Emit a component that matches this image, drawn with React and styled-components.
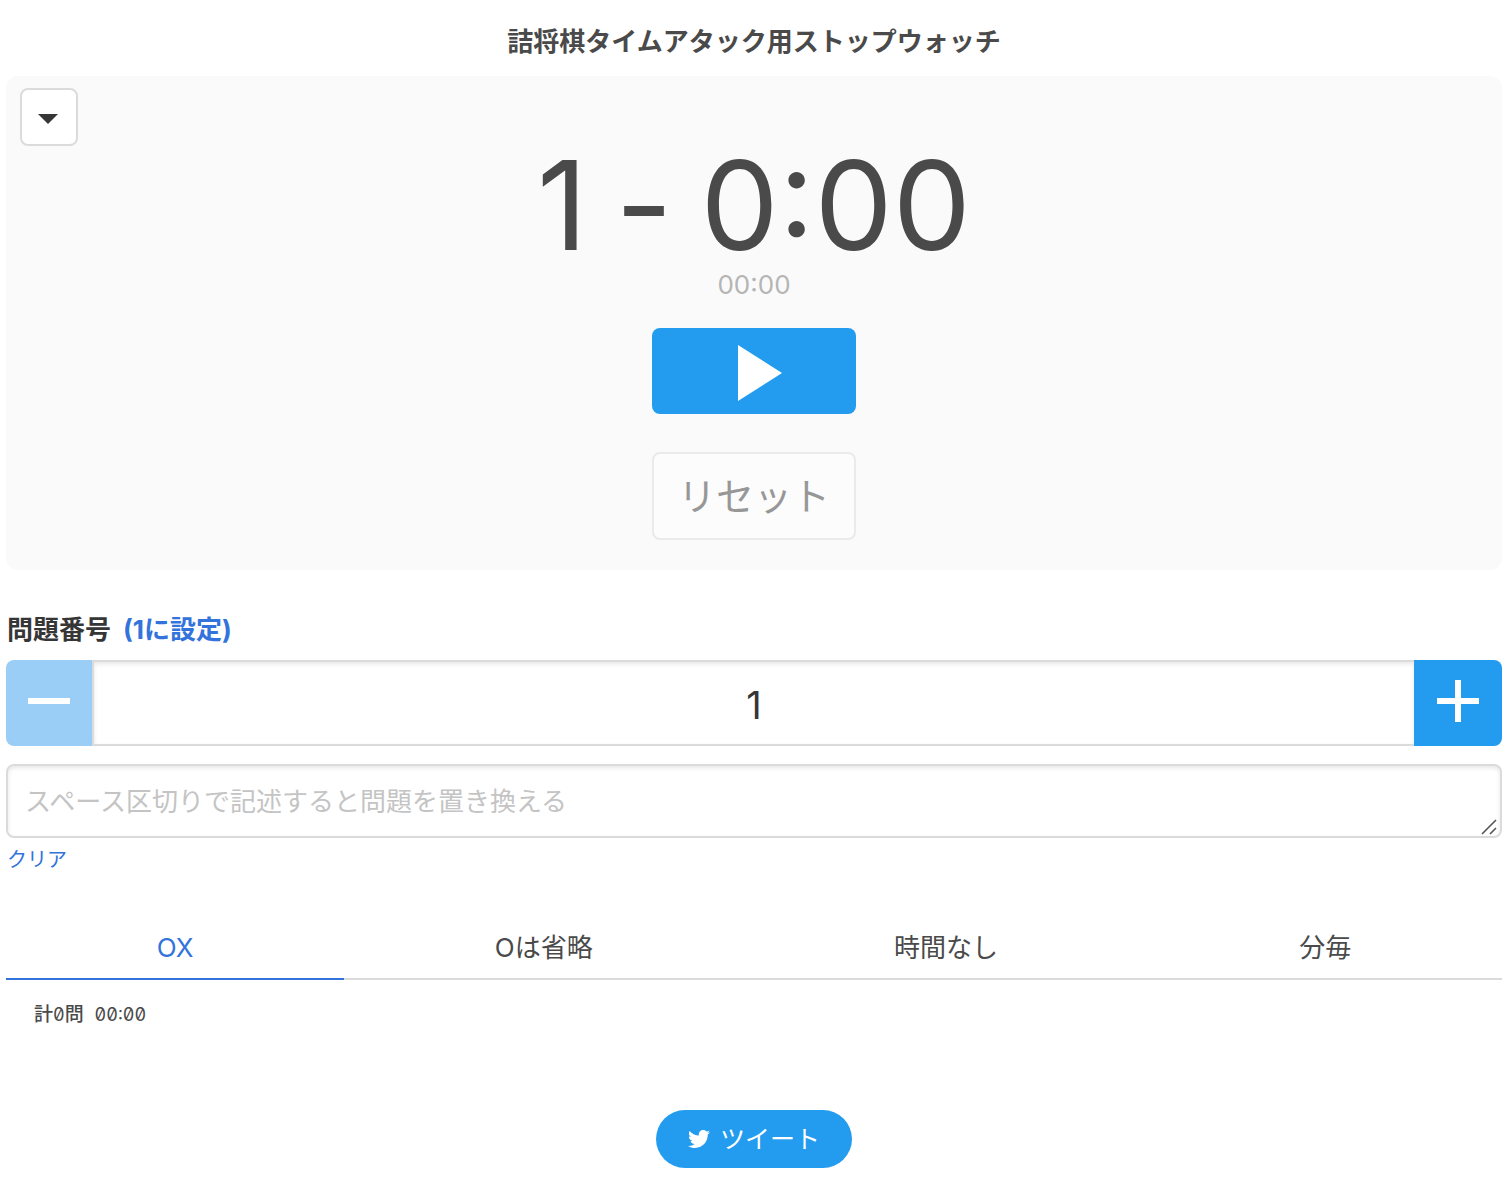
import React, { useState } from "react";
import styled, { createGlobalStyle, css } from "styled-components";
import { FaTwitter } from "react-icons/fa";

const GlobalStyle = createGlobalStyle`
  *, *::before, *::after { box-sizing: border-box; }
  body {
    margin: 0;
    background: #fff;
    color: #4a4a4a;
    font: 400 26px/38px Inter, "Noto Sans CJK JP", sans-serif;
  }
  h1, h2, p, pre { margin: 0; font: inherit; }
  button, input, textarea { margin: 0; font: inherit; color: inherit; }
`;

const Page = styled.main`
  padding: 23px 8px 26px 6px;
`;

const Title = styled.h1`
  && { font-weight: 700; }
  text-align: center;
`;

const TimerPanel = styled.section`
  position: relative;
  display: flex;
  flex-direction: column;
  align-items: center;
  margin-top: 15px;
  padding: 68px 14px 30px;
  border-radius: 12px;
  background: #fafafa;
`;

const MenuButton = styled.button`
  position: absolute;
  top: 12px;
  left: 14px;
  display: grid;
  place-items: center;
  width: 58px;
  height: 58px;
  padding: 4px 2px 0 0;
  border: 2px solid #dbdbdb;
  border-radius: 8px;
  background: #fff;
  color: #363636;
`;

const Clock = styled.p`
  display: flex;
  gap: 28px;
  && { font-size: 124px; line-height: 122px; }
`;

const Elapsed = styled.p`
  margin-bottom: 24px;
  color: #b5b5b5;
`;

const solid = css`
  border: 0;
  background: #239cf0;
  color: #fff;
`;

const outlined = css`
  border: 2px solid #dbdbdb;
  background: #fff;
  color: #363636;
`;

const ActionButton = styled.button`
  display: flex;
  align-items: center;
  justify-content: center;
  width: 204px;
  height: ${(p) => (p.$primary ? 86 : 88)}px;
  margin-bottom: ${(p) => (p.$primary ? 38 : 0)}px;
  padding: 0;
  border-radius: 8px;
  && { font-size: 38px; }
  ${(p) => (p.$primary ? solid : outlined)}
  &:disabled { opacity: 0.5; }
  svg { margin: 4px 0 0 12px; }
`;

const Heading = styled.div`
  display: flex;
  gap: 12px;
  margin: 41px 0 11px;
  padding-left: 1px;
  font-weight: 700;
  color: #363636;
`;

const Link = styled.a`
  color: #3273dc;
  text-decoration: none;
`;

const Stepper = styled.div`
  display: flex;
  height: 86px;
`;

const StepButton = styled.button`
  display: grid;
  place-items: center;
  flex: none;
  width: ${(p) => (p.$end ? 88 : 86)}px;
  padding: 0 0 4px;
  border-radius: ${(p) => (p.$end ? "0 8px 8px 0" : "8px 0 0 8px")};
  ${solid}
  &:disabled { background: #9bcef6; }
`;

const field = css`
  border: 2px solid #dbdbdb;
  background: #fff;
  box-shadow: inset 0 2px 4px rgba(10, 10, 10, 0.1);
  color: #363636;
  outline: 0;
`;

const NumberInput = styled.input`
  flex: 1;
  min-width: 0;
  padding: 4px 0 0;
  ${field}
  border-right: 0;
  && { font-size: 38px; }
  text-align: center;
`;

const NamesField = styled.div`
  position: relative;
  margin-top: 18px;
`;

const NamesInput = styled.textarea`
  display: block;
  width: 100%;
  height: 74px;
  padding: 17px 17px 12px;
  ${field}
  border-radius: 8px;
  overflow: hidden;
  resize: vertical;
  &::placeholder { color: #c4c4c4; opacity: 1; }
  &::-webkit-resizer { background: transparent; }
`;

const Grip = styled.svg`
  position: absolute;
  right: 5px;
  bottom: 3px;
  pointer-events: none;
`;

const ClearLink = styled(Link)`
  display: block;
  width: max-content;
  margin: 8px 0 41px;
  padding-left: 1px;
  font-size: 20px;
  line-height: 28px;
`;

const Tabs = styled.nav`
  display: flex;
`;

const Tab = styled.a`
  flex: 1 1 auto;
  padding: 14px 26px 11px;
  border-bottom: 2px solid ${(p) => (p.$active ? "#3273dc" : "#dbdbdb")};
  color: ${(p) => (p.$active ? "#3273dc" : "#4a4a4a")};
  text-align: center;
  text-decoration: none;
`;

const Summary = styled.pre`
  padding: 20px 28px;
  && {
    font-size: 18px;
    line-height: 30px;
    font-feature-settings: "zero", "tnum";
  }
`;

const Unit = styled.span`
  font-size: 19px;
  font-weight: 500;
`;

const Total = styled.span`
  margin-left: 6px;
`;

const Share = styled.footer`
  display: flex;
  justify-content: center;
  margin-top: 60px;
`;

const TweetButton = styled.a`
  display: flex;
  align-items: center;
  gap: 10px;
  height: 58px;
  padding: 0 32px;
  border-radius: 29px;
  ${solid}
  font-size: 25px;
  text-decoration: none;
`;

const TABS = ["OX", "Oは省略", "時間なし", "分毎"];

export default function App() {
  const [number, setNumber] = useState(1);
  const [tab, setTab] = useState(TABS[0]);
  const [names, setNames] = useState("");
  return (
    <Page>
      <GlobalStyle />
      <Title>詰将棋タイムアタック用ストップウォッチ</Title>

      <TimerPanel>
        <MenuButton type="button" aria-label="メニュー">
          <svg width="20" height="10" viewBox="0 0 20 10" aria-hidden="true">
            <path d="M0 0H20L10 10Z" fill="currentColor" />
          </svg>
        </MenuButton>
        <Clock>
          <span>{number}</span>
          <span>-</span>
          <span>0:00</span>
        </Clock>
        <Elapsed>00:00</Elapsed>
        <ActionButton type="button" $primary aria-label="スタート">
          <svg width="44" height="56" viewBox="0 0 44 56" aria-hidden="true">
            <path d="M0 0L44 28L0 56Z" fill="currentColor" />
          </svg>
        </ActionButton>
        <ActionButton type="button" disabled>リセット</ActionButton>
      </TimerPanel>

      <Heading>
        <label htmlFor="number">問題番号</label>
        <Link href="#number" onClick={() => setNumber(1)}>(1に設定)</Link>
      </Heading>
      <Stepper>
        <StepButton
          type="button"
          aria-label="減らす"
          disabled={number <= 1}
          onClick={() => setNumber(number - 1)}
        >
          <svg width="42" height="42" viewBox="0 0 42 42" aria-hidden="true">
            <path d="M0 18H42V24H0Z" fill="#fff" />
          </svg>
        </StepButton>
        <NumberInput
          id="number"
          inputMode="numeric"
          value={number}
          onChange={(e) => setNumber(Number(e.target.value) || 1)}
        />
        <StepButton type="button" $end aria-label="増やす" onClick={() => setNumber(number + 1)}>
          <svg width="42" height="42" viewBox="0 0 42 42" aria-hidden="true">
            <path d="M0 18H18V0H24V18H42V24H24V42H18V24H0Z" fill="#fff" />
          </svg>
        </StepButton>
      </Stepper>
      <NamesField>
        <NamesInput
          id="names"
          rows={1}
          aria-label="問題"
          placeholder="スペース区切りで記述すると問題を置き換える"
          value={names}
          onChange={(e) => setNames(e.target.value)}
        />
        <Grip width="16" height="16" viewBox="0 0 16 16" aria-hidden="true">
          <path d="M1 15L15 1M9 15L15 9" stroke="#555" strokeWidth="1.6" fill="none" />
        </Grip>
      </NamesField>
      <ClearLink href="#names" onClick={() => setNames("")}>クリア</ClearLink>

      <Tabs>
        {TABS.map((name) => (
          <Tab key={name} href="#result" $active={name === tab} onClick={() => setTab(name)}>
            {name}
          </Tab>
        ))}
      </Tabs>
      <Summary id="result">
        <Unit>計</Unit>0<Unit>問</Unit> <Total>00:00</Total>
      </Summary>

      <Share>
        <TweetButton href="#tweet">
          <FaTwitter size={22} aria-hidden="true" />
          ツイート
        </TweetButton>
      </Share>
    </Page>
  );
}
